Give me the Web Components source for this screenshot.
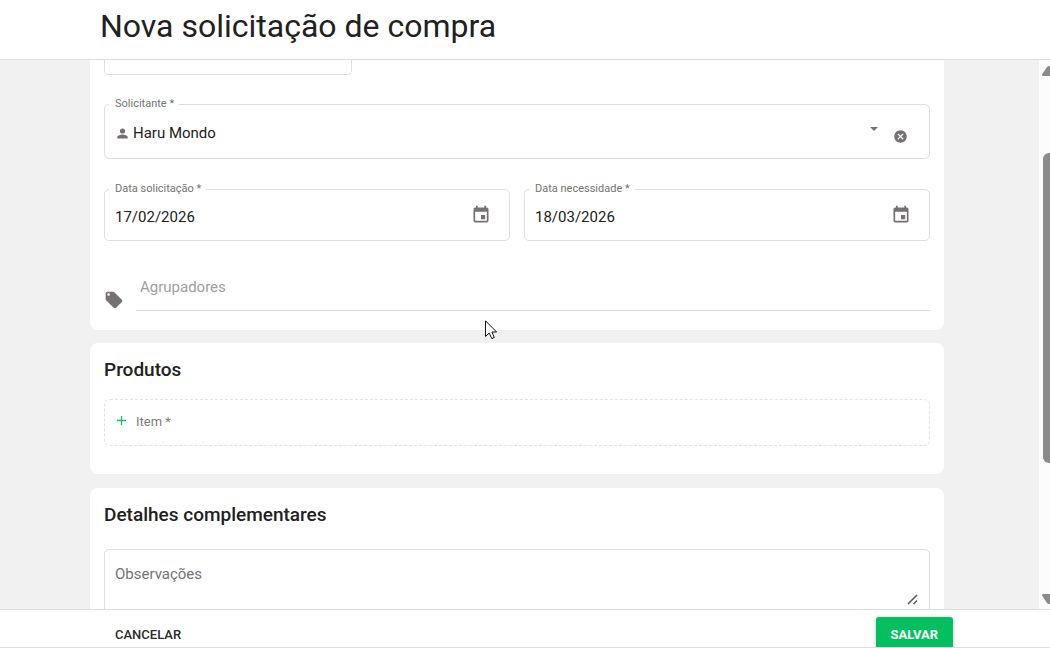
<!DOCTYPE html>
<html lang="pt-BR">
<head>
<meta charset="utf-8">
<meta name="viewport" content="width=device-width, initial-scale=1">
<title>Nova solicitação de compra</title>
<style>
  html, body { height: 100%; }
  body { margin: 0; font-family: Roboto, "Liberation Sans", sans-serif; color: #212121; background: #fff; overflow: hidden;
    --line: #dedede; --muted: #6f7471; --icon: #757173; --green: #03bf5f; }
</style>
</head>
<body>
<purchase-page></purchase-page>
<script>
const define = (name, html, setup) => {
  const template = document.createElement('template');
  template.innerHTML = html;
  customElements.define(name, class extends HTMLElement {
    constructor() {
      super();
      this.attachShadow({ mode: 'open' }).append(template.content.cloneNode(true));
    }
    connectedCallback() { if (setup) setup(this, this.shadowRoot); }
  });
};

const outline = `
  :host { display: block; min-width: 0; }
  fieldset { box-sizing: border-box; margin: 0; padding: 0; min-width: 0; border: 1px solid var(--line); border-radius: 5px; }
  legend { margin-left: 4px; padding: 0 5px 0 6px; font-size: 11px; line-height: 12px; color: var(--muted); }
  button { display: flex; padding: 0; border: 0; background: none; color: var(--icon); }
  svg { display: block; fill: currentColor; }`;

define('person-field', `
  <style>${outline}
    .row { display: flex; align-items: center; box-sizing: border-box; height: 48px; padding: 0 21px 2px 12px; }
    .person { color: var(--icon); margin-right: 5px; }
    select { appearance: none; flex: 1; min-width: 0; padding: 0; border: 0; background: none; font: 15px/20px Roboto, sans-serif; color: #212121; }
    .arrow { color: var(--icon); margin: 0 15px 8px 0; }
    button { margin-top: 6px; }
  </style>
  <fieldset>
    <legend><label for="person">Solicitante *</label></legend>
    <div class="row">
      <svg class="person" width="11" height="11" viewBox="0 0 11 11" aria-hidden="true"><circle cx="5.500" cy="3" r="2.600"/><path d="M.3 10.500V9.200C.3 7.500 3.800 6.600 5.500 6.600s5.200.9 5.200 2.600v1.300z"/></svg>
      <select id="person"><option>Haru Mondo</option></select>
      <svg class="arrow" width="8" height="4" viewBox="0 0 8 4" aria-hidden="true"><path d="M0 0h8L4 4z"/></svg>
      <button type="button" aria-label="Limpar solicitante">
        <svg width="15" height="15" viewBox="0 0 24 24"><path d="M12 2C6.470 2 2 6.470 2 12s4.470 10 10 10 10-4.470 10-10S17.530 2 12 2zm5 13.590L15.590 17 12 13.410 8.410 17 7 15.590 10.590 12 7 8.410 8.410 7 12 10.590 15.590 7 17 8.410 13.410 12 17 15.590z"/></svg>
      </button>
    </div>
  </fieldset>`);

define('date-field', `
  <style>${outline}
    .row { display: flex; align-items: center; box-sizing: border-box; height: 45px; padding: 0 18px 2px 10px; }
    input { flex: 1; min-width: 0; padding: 0; border: 0; outline: 0; background: none; font: 15px/20px Roboto, sans-serif; color: #212121; }
    button { margin-bottom: 4px; }
  </style>
  <fieldset>
    <legend><label for="date"></label></legend>
    <div class="row">
      <input id="date" type="text">
      <button type="button" aria-label="Abrir calendário">
        <svg width="20" height="20" viewBox="0 0 24 24"><path d="M19 3h-1V1h-2v2H8V1H6v2H5c-1.110 0-1.990.9-1.990 2L3 19c0 1.100.89 2 2 2h14c1.100 0 2-.9 2-2V5c0-1.100-.9-2-2-2zm0 16H5V8h14v11zM12 12h5v5h-5z"/></svg>
      </button>
    </div>
  </fieldset>`, (host, root) => {
  root.querySelector('label').textContent = host.getAttribute('label');
  root.querySelector('input').value = host.getAttribute('value');
});

define('tag-field', `
  <style>
    :host { display: flex; align-items: flex-end; }
    svg { display: block; fill: var(--icon); margin: 0 12px 1px 0; flex: none; }
    input { box-sizing: border-box; flex: 1; min-width: 0; height: 48px; padding: 0 4px; border: 0; border-bottom: 1px solid var(--line); outline: 0; background: none; font: 15px/20px Roboto, sans-serif; }
    input::placeholder { color: #9b9f9b; opacity: 1; }
  </style>
  <svg width="20" height="20" viewBox="0 0 24 24" aria-hidden="true"><path d="M21.410 11.580l-9-9C12.050 2.220 11.550 2 11 2H4c-1.100 0-2 .9-2 2v7c0 .55.22 1.050.59 1.420l9 9c.36.36.86.58 1.410.58s1.050-.22 1.410-.59l7-7c.37-.36.59-.86.59-1.410s-.23-1.060-.59-1.420zM5.500 7C4.670 7 4 6.330 4 5.500S4.670 4 5.500 4 7 4.670 7 5.500 6.330 7 5.500 7z"/></svg>
  <input type="text" placeholder="Agrupadores" aria-label="Agrupadores">`);

define('item-adder', `
  <style>
    :host { display: block; }
    button { display: flex; align-items: center; gap: 9px; box-sizing: border-box; width: 100%; height: 47px; padding: 0 12px 2px; border: 1px dashed #e2e2e2; border-radius: 6px; background: none; font: 13px/16px Roboto, sans-serif; color: #7b7b7b; }
    svg { display: block; margin-bottom: 2px; }
  </style>
  <button type="button">
    <svg width="10" height="10" viewBox="0 0 10 10" aria-hidden="true"><path d="M0 4.500h9M4.500 0v9" stroke="#20b573" stroke-width="1.300"/></svg>
    <span>Item *</span>
  </button>`);

define('notes-field', `
  <style>
    :host { display: block; position: relative; }
    textarea { display: block; box-sizing: border-box; width: 100%; height: 88px; padding: 14px 10px; border: 1px solid var(--line); border-radius: 5px; outline: 0; resize: none; background: none; font: 15px/20px Roboto, sans-serif; }
    textarea::placeholder { color: var(--muted); opacity: 1; }
    svg { position: absolute; top: 45px; right: 12px; }
  </style>
  <textarea placeholder="Observações" aria-label="Observações"></textarea>
  <svg width="11" height="11" viewBox="0 0 11 11" aria-hidden="true"><path d="M1 10L10 1M6.500 10L10 6.500" stroke="#555" stroke-width="1.500"/></svg>`);

define('form-card', `
  <style>
    :host { display: block; padding: 14px; border-radius: 8px; background: #fff; }
    ::slotted(h2) { margin: 0; font-size: 19px; line-height: 26px; font-weight: 500; color: #212121; }
  </style>
  <slot></slot>`);

define('scroll-rail', `
  <style>
    :host { display: grid; grid-template-rows: 93fr 310fr 146fr; width: 11px; overflow: hidden; background: #fcfcfc; }
    .end { display: flex; padding: 6px 0 5px 3px; }
    .down { align-items: flex-end; }
    .thumb { width: 12px; margin-left: 4px; border-radius: 6px; background: #8b8b8b; }
    svg { display: block; fill: #8b8b8b; flex: none; }
  </style>
  <div class="end"><svg width="14" height="10" viewBox="0 0 14 10"><path d="M1 10Q0 10 0 8.500L5 1Q7-1 9 1l5 7.500Q14 10 13 10z"/></svg></div>
  <div class="thumb"></div>
  <div class="end down"><svg width="14" height="10" viewBox="0 0 14 10"><path d="M1 0Q0 0 0 1.500L5 9q2 2 4 0l5-7.500Q14 0 13 0z"/></svg></div>`);

define('action-bar', `
  <style>
    :host { display: flex; justify-content: space-between; align-items: flex-start; box-sizing: border-box; height: 39px; padding: 7px 97px 0 105px; border-top: 1px solid var(--line); border-bottom: 1px solid var(--line); overflow: hidden; background: #fff; }
    button { height: 36px; padding: 0 10px; border: 0; border-radius: 3px; background: none; font: 500 13px/36px Roboto, sans-serif; color: #2b2b2b; }
    .save { padding: 0 15px 0 14px; background: var(--green); color: #fff; font-weight: 700; box-shadow: 0 1px 4px rgba(0, 0, 0, .25); }
  </style>
  <button type="button">CANCELAR</button>
  <button type="submit" class="save">SALVAR</button>`);

define('mouse-pointer', `
  <style>
    :host { position: absolute; left: 485px; top: 320px; pointer-events: none; }
    svg { display: block; }
  </style>
  <svg width="13" height="20" viewBox="0 0 13 20" aria-hidden="true"><path d="M.5.800V16.500L4.200 13l2.600 5.600 2.500-1.100L6.900 12h4.700z" fill="#fff" stroke="#111"/></svg>`);

define('purchase-page', `
  <style>
    :host { display: flex; flex-direction: column; height: 100vh; }
    header { padding: 5px 100px 12px; border-bottom: 1px solid var(--line); }
    h1 { margin: 0; font-size: 32px; line-height: 42px; font-weight: 400; }
    main { flex: 1; display: flex; min-height: 0; background: #f1f1f1; }
    .view { flex: 1; min-width: 0; overflow: hidden; padding: 0 95px 0 90px; }
    .general { padding: 0 14px 19px; border-radius: 0 0 8px 8px; }
    .previous { box-sizing: border-box; width: 30%; height: 15px; border: 1px solid var(--line); border-top: 0; border-radius: 0 0 5px 5px; }
    person-field { margin-top: 23px; }
    .dates { display: grid; grid-template-columns: 1fr 1fr; gap: 14px; margin-top: 24px; }
    tag-field { margin-top: 22px; }
    .products { margin-top: 13px; padding-bottom: 28px; }
    item-adder { margin-top: 16px; }
    .details { margin-top: 14px; }
    notes-field { margin-top: 21px; }
  </style>
  <header><h1>Nova solicitação de compra</h1></header>
  <main>
    <div class="view">
      <form-card class="general">
        <div class="previous"></div>
        <person-field></person-field>
        <div class="dates">
          <date-field label="Data solicitação *" value="17/02/2026"></date-field>
          <date-field label="Data necessidade *" value="18/03/2026"></date-field>
        </div>
        <tag-field></tag-field>
      </form-card>
      <form-card class="products"><h2>Produtos</h2><item-adder></item-adder></form-card>
      <form-card class="details"><h2>Detalhes complementares</h2><notes-field></notes-field></form-card>
    </div>
    <scroll-rail></scroll-rail>
  </main>
  <action-bar></action-bar>
  <mouse-pointer></mouse-pointer>`);
</script>
</body>
</html>
